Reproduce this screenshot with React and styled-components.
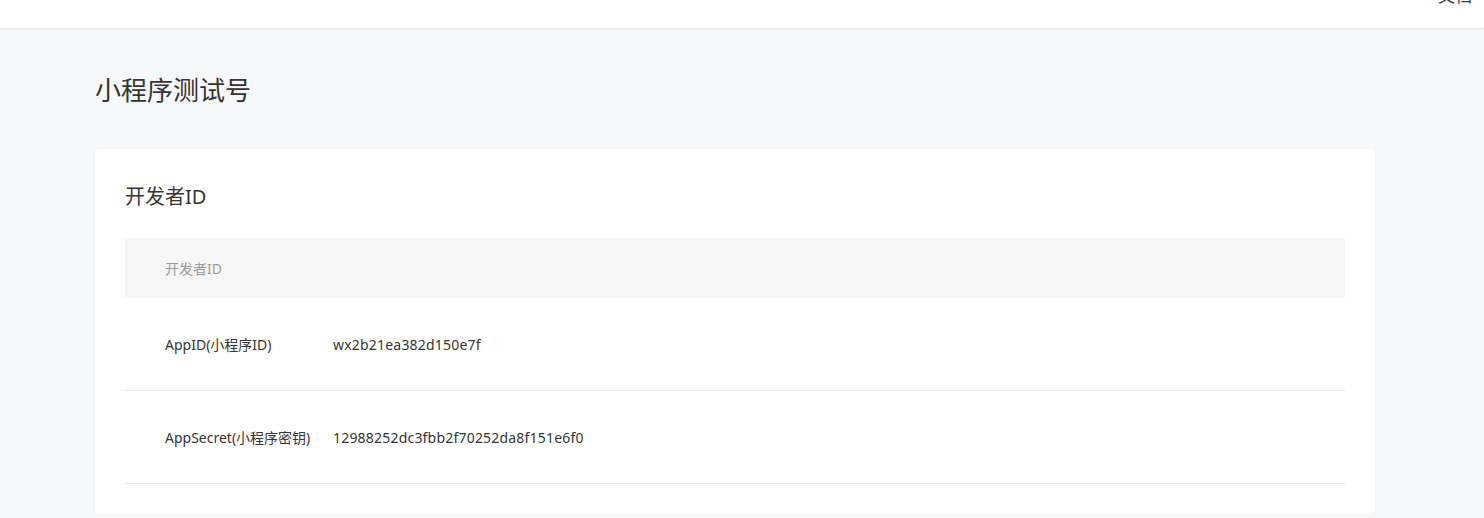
import React from 'react';
import styled, { createGlobalStyle } from 'styled-components';

const GlobalStyle = createGlobalStyle`
  html, body {
    margin: 0;
    padding: 0;
    background: #f7f8fa;
    font-family: "Noto Sans", "Noto Sans CJK SC", "Liberation Sans", sans-serif;
    color: #353535;
  }
`;

const TopBar = styled.header`
  height: 28px;
  background: #fff;
  border-bottom: 1px solid #e4e6e9;
  box-shadow: 0 1px 2px rgba(0, 0, 0, 0.04);
  display: flex;
  justify-content: flex-end;
  overflow: hidden;
`;

const TopLink = styled.a`
  font-size: 17px;
  line-height: 20px;
  margin-top: -14px;
  margin-right: 12px;
  color: #353535;
  text-decoration: none;
`;

const Main = styled.main`
  padding: 43px 109px 0 95px;
`;

const PageTitle = styled.h1`
  margin: 0 0 41px;
  font-size: 26px;
  line-height: 36px;
  font-weight: 400;
  color: #353535;
`;

const Card = styled.section`
  background: #fff;
  border-radius: 4px;
  box-shadow: 0 1px 2px rgba(0, 0, 0, 0.08);
  padding: 34px 30px 30px;
`;

const CardTitle = styled.h2`
  margin: 0 0 27px;
  font-size: 20px;
  line-height: 28px;
  font-weight: 400;
  color: #353535;
`;

const Table = styled.table`
  width: 100%;
  border-collapse: collapse;
  font-size: 14px;
`;

const HeadCell = styled.th`
  height: 60px;
  padding: 0 0 0 40px;
  background: #f6f6f7;
  color: #9a9a9a;
  font-weight: 400;
  text-align: left;
`;

const Row = styled.tr`
  border-bottom: 1px solid #e7e7e7;
`;

const Cell = styled.td`
  height: 92px;
  padding: 0 0 0 ${p => (p.$label ? '40px' : '0')};
  width: ${p => (p.$label ? '168px' : 'auto')};
  color: #353535;
  vertical-align: middle;
  white-space: nowrap;
  letter-spacing: ${p => (p.$label ? '0' : '0.2px')};
`;

const rows = [
  { label: 'AppID(小程序ID)', value: 'wx2b21ea382d150e7f' },
  { label: 'AppSecret(小程序密钥)', value: '12988252dc3fbb2f70252da8f151e6f0' },
];

const App = () => {
  return (
    <>
      <GlobalStyle />
      <TopBar>
        <TopLink href="#">文档</TopLink>
      </TopBar>
      <Main>
        <PageTitle>小程序测试号</PageTitle>
        <Card>
          <CardTitle>开发者ID</CardTitle>
          <Table>
            <thead>
              <tr>
                <HeadCell colSpan={2}>开发者ID</HeadCell>
              </tr>
            </thead>
            <tbody>
              {rows.map(r => (
                <Row key={r.label}>
                  <Cell $label>{r.label}</Cell>
                  <Cell>{r.value}</Cell>
                </Row>
              ))}
            </tbody>
          </Table>
        </Card>
      </Main>
    </>
  );
};

export default App;
